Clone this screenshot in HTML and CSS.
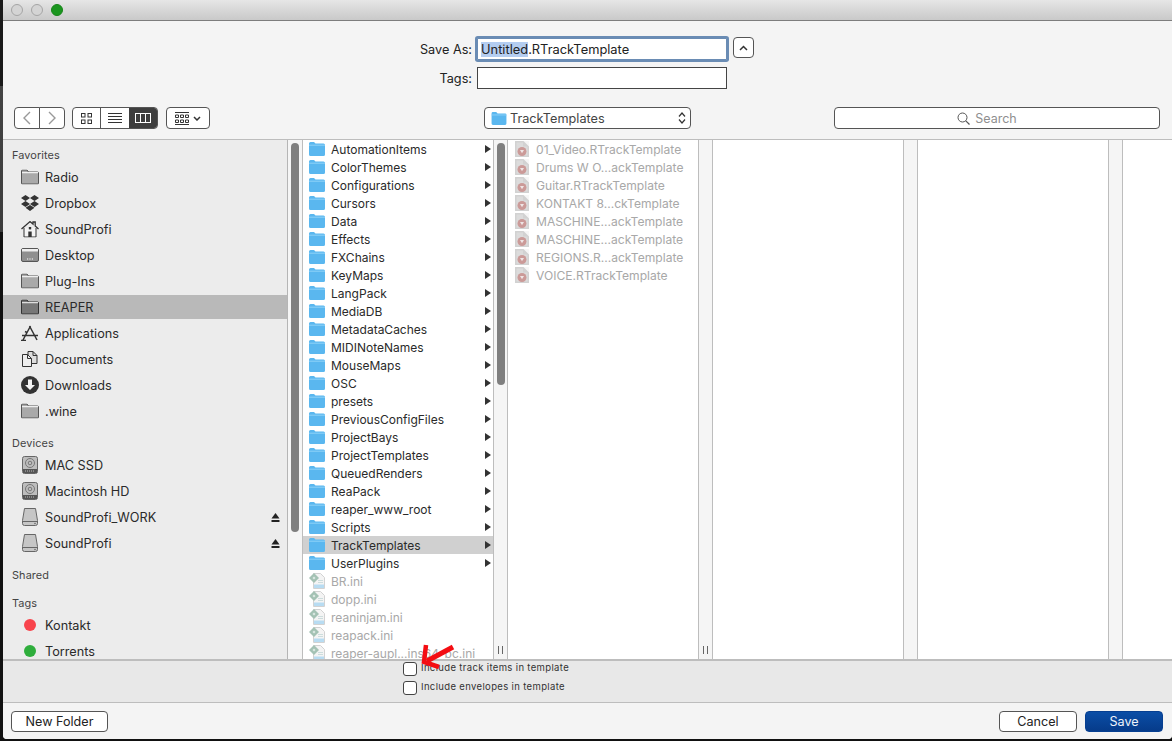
FILE: index.html
```html
<!DOCTYPE html>
<html lang="en">
<head>
<meta charset="utf-8">
<title>Save As</title>
<link rel="stylesheet" href="styles.css">
</head>
<body>
<svg class="defs" width="0" height="0" aria-hidden="true">
  <symbol id="side-folder" viewBox="0 0 18 15"><path d="M.5 14V1.500q0-1 1-1h4.500l1.500 2h9q1 0 1 1V14q0 .5-.5.5H1q-.5 0-.5-.5z" fill="#a9a9a9" stroke="#555"/><path d="M1 3.200h16" stroke="#eee" stroke-width="1.200"/></symbol>
  <symbol id="side-folder-dark" viewBox="0 0 18 15"><path d="M.5 14V1.500q0-1 1-1h4.500l1.500 2h9q1 0 1 1V14q0 .5-.5.5H1q-.5 0-.5-.5z" fill="#777" stroke="#333"/><path d="M1 3.200h16" stroke="#ddd" stroke-width="1.200"/></symbol>
  <symbol id="dropbox" viewBox="0 0 18 16"><path d="M4.500 0 0 3l4.500 3L9 3zM13.500 0 9 3l4.500 3L18 3zM0 9l4.500 3L9 9 4.500 6zM18 9l-4.500 3L9 9l4.500-3zM4.500 12.800 9 10l4.500 2.800L9 16z" fill="#333"/></symbol>
  <symbol id="home" viewBox="0 0 18 17"><path d="M.5 8.500 9 1l3 2.600V1.500h2.200v4L17.500 8.500" fill="none" stroke="#333" stroke-width="1.300"/><path d="M3 7.500V16.500h12V7.500" fill="#f4f4f4" stroke="#333"/><rect x="7.300" y="11" width="3.400" height="5.500" fill="#333"/><rect x="7.800" y="6.500" width="2.400" height="2.400" fill="#333"/></symbol>
  <symbol id="desktop" viewBox="0 0 18 14"><rect x=".5" y=".5" width="17" height="13" rx="1.500" fill="#8f8f8f" stroke="#555"/><rect x="1" y="1" width="16" height="2.500" fill="#eee"/><path d="M6 11h1.200M8.400 11h1.200M10.800 11H12" stroke="#fff" stroke-width="1.200"/></symbol>
  <symbol id="apps" viewBox="0 0 18 16"><path d="M2 15 9.500 1M16 15 8.500 1M1 10.500h16M4 6.500l2 1M0 15.500h5" fill="none" stroke="#333" stroke-width="1.500"/></symbol>
  <symbol id="docs" viewBox="0 0 16 16"><path d="M6 .5h5l4 4v8H6z" fill="#ddd" stroke="#333"/><path d="M.5 3.500h5l4 4v8h-9z" fill="#eee" stroke="#333"/><path d="M5.500 3.500v4h4M11 .5v4h4" fill="none" stroke="#333"/></symbol>
  <symbol id="download" viewBox="0 0 18 18"><circle cx="9" cy="9" r="9" fill="#333"/><path d="M7 3.500h4V9h3l-5 5-5-5h3z" fill="#f5f5f5"/></symbol>
  <symbol id="hd" viewBox="0 0 16 18"><rect x=".5" y=".5" width="15" height="17" rx="2" fill="#bdbdbd" stroke="#666"/><circle cx="8" cy="7" r="4.500" fill="none" stroke="#777"/><circle cx="8" cy="7" r="1.800" fill="none" stroke="#777"/><rect x="1" y="13" width="14" height="4" fill="#555"/><path d="M3 15h10" stroke="#bbb" stroke-dasharray="1 1"/></symbol>
  <symbol id="ext" viewBox="0 0 16 18"><path d="M2.500.5h11l2 12v3q0 2-2 2h-11q-2 0-2-2v-3z" fill="#c6c6c6" stroke="#666"/><path d="M.8 13.500h14.400" stroke="#666"/><circle cx="13" cy="15.500" r=".7" fill="#555"/></symbol>
  <symbol id="eject" viewBox="0 0 9 9"><path d="M4.500 0 8.500 5.500H.5z" fill="#222"/><rect x=".5" y="7" width="8" height="2" fill="#222"/></symbol>
  <symbol id="folder" viewBox="0 0 16 14"><path d="M0 12.500V1.500Q0 0 1.500 0H5l1.500 1.500h8Q16 1.500 16 3v9.500q0 1.500-1.500 1.500h-13Q0 14 0 12.500z" fill="#5ab7ef"/><path d="M0 3.200h16" stroke="#8ed2f8"/></symbol>
  <symbol id="template" viewBox="0 0 14 16"><rect width="14" height="16" fill="#d2d2d2"/><path d="M8.500 0H14v5.500z" fill="#f6f6f6"/><path d="M1.500 1.500h6.500v4h4.500v9h-11z" fill="#dcdcdc"/><circle cx="7" cy="10.500" r="4.500" fill="#cb9a98"/><path d="M5 9h4l-2 3.300z" fill="#efe6e6"/></symbol>
  <symbol id="ini" viewBox="0 0 16 16"><path d="M4.500.5h7l4 4v11h-11z" fill="#f4f4f4" stroke="#d2d2d2"/><path d="M5 11.500h10v3.500H5z" fill="#b8dcf2"/><path d="M5 0 10 5 5 10 0 5z" fill="#a4c2b4"/><path d="M5 3.500 6.500 5 5 6.500 3.500 5z" fill="#dfeae5"/><path d="M9 7.500h5M9 9.500h5" stroke="#cdd"/></symbol>
</svg>

<div class="window">
  <div class="titlebar">
    <span class="light"></span><span class="light"></span><span class="light light-green"></span>
  </div>

  <header class="head">
    <div class="form-row">
      <label class="form-label">Save As:</label>
      <div class="name-field"><span class="selection">Untitled</span>.RTrackTemplate</div>
      <button class="collapse" type="button"><svg width="9" height="6" viewBox="0 0 9 6"><path d="M1 5 4.500 1.500 8 5" fill="none" stroke="#333" stroke-width="1.500"/></svg></button>
    </div>
    <div class="form-row form-row-tags">
      <label class="form-label">Tags:</label>
      <div class="tags-field"></div>
    </div>
    <div class="toolbar">
      <div class="tool-group">
        <div class="seg seg-nav">
          <span class="seg-btn seg-back"><svg width="10" height="14" viewBox="0 0 10 14"><path d="M8 1 2 7l6 6" fill="none" stroke="#999" stroke-width="1.400"/></svg></span>
          <span class="seg-btn seg-fwd"><svg width="10" height="14" viewBox="0 0 10 14"><path d="M2 1l6 6-6 6" fill="none" stroke="#999" stroke-width="1.400"/></svg></span>
        </div>
        <div class="seg seg-view">
          <span class="view-btn view-icons"><svg width="11" height="11" viewBox="0 0 11 11" fill="none" stroke="#333"><rect x=".5" y=".5" width="3.500" height="3.500"/><rect x="7" y=".5" width="3.500" height="3.500"/><rect x=".5" y="7" width="3.500" height="3.500"/><rect x="7" y="7" width="3.500" height="3.500"/></svg></span>
          <span class="view-btn view-list"><svg width="14" height="11" viewBox="0 0 14 11" stroke="#333"><path d="M0 .5h14M0 3.500h14M0 6.500h14M0 9.500h14"/></svg></span>
          <span class="view-btn view-cols"><svg width="16" height="10" viewBox="0 0 16 10" fill="none" stroke="#fff"><rect x=".5" y=".5" width="15" height="9"/><path d="M5.500 0v10M10.500 0v10"/></svg></span>
        </div>
        <div class="seg seg-arrange">
          <svg width="14" height="13" viewBox="0 0 14 13" fill="none" stroke="#333"><path d="M0 .5h14M0 12.500h14"/><path d="M.5 3h3v2.500h-3zM5.500 3h3v2.500h-3zM10.500 3h3v2.500h-3zM.5 8h3v2.500h-3zM5.500 8h3v2.500h-3zM10.500 8h3v2.500h-3z"/></svg>
          <svg width="8" height="5" viewBox="0 0 8 5"><path d="M1 1l3 3 3-3" fill="none" stroke="#333" stroke-width="1.500"/></svg>
        </div>
      </div>
      <div class="location">
        <svg class="loc-folder" width="16" height="13"><use href="#folder"/></svg>
        <span class="loc-name">TrackTemplates</span>
        <svg width="8" height="14" viewBox="0 0 8 14"><path d="M1 5.500 4 2l3 3.500M1 8.500 4 12l3-3.500" fill="none" stroke="#333" stroke-width="1.200"/></svg>
      </div>
      <div class="search">
        <svg width="13" height="13" viewBox="0 0 13 13"><circle cx="5.500" cy="5.500" r="4.500" fill="none" stroke="#555"/><path d="M8.800 8.800 12.500 12.500" stroke="#555" stroke-width="1.200"/></svg>
        <span>Search</span>
      </div>
    </div>
  </header>

  <main class="browser">
    <nav class="sidebar">
      <h2 class="side-title">Favorites</h2>
      <div class="side-item"><svg class="side-icon" width="18" height="15"><use href="#side-folder"/></svg>Radio</div>
      <div class="side-item"><svg class="side-icon" width="18" height="16"><use href="#dropbox"/></svg>Dropbox</div>
      <div class="side-item"><svg class="side-icon" width="18" height="17"><use href="#home"/></svg>SoundProfi</div>
      <div class="side-item"><svg class="side-icon" width="18" height="14"><use href="#desktop"/></svg>Desktop</div>
      <div class="side-item"><svg class="side-icon" width="18" height="15"><use href="#side-folder"/></svg>Plug-Ins</div>
      <div class="side-item side-active"><svg class="side-icon" width="18" height="15"><use href="#side-folder-dark"/></svg>REAPER</div>
      <div class="side-item"><svg class="side-icon" width="18" height="16"><use href="#apps"/></svg>Applications</div>
      <div class="side-item"><svg class="side-icon" width="16" height="16"><use href="#docs"/></svg>Documents</div>
      <div class="side-item"><svg class="side-icon" width="18" height="18"><use href="#download"/></svg>Downloads</div>
      <div class="side-item"><svg class="side-icon" width="18" height="15"><use href="#side-folder"/></svg>.wine</div>
      <h2 class="side-title side-title-gap">Devices</h2>
      <div class="side-item"><svg class="side-icon" width="16" height="18"><use href="#hd"/></svg>MAC SSD</div>
      <div class="side-item"><svg class="side-icon" width="16" height="18"><use href="#hd"/></svg>Macintosh HD</div>
      <div class="side-item"><svg class="side-icon" width="16" height="18"><use href="#ext"/></svg>SoundProfi_WORK<svg class="eject" width="9" height="9"><use href="#eject"/></svg></div>
      <div class="side-item"><svg class="side-icon" width="16" height="18"><use href="#ext"/></svg>SoundProfi<svg class="eject" width="9" height="9"><use href="#eject"/></svg></div>
      <h2 class="side-title side-title-gap">Shared</h2>
      <h2 class="side-title side-title-tags">Tags</h2>
      <div class="side-item"><span class="tag tag-red"></span>Kontakt</div>
      <div class="side-item"><span class="tag tag-green"></span>Torrents</div>
    </nav>

    <div class="gutter gutter-first"><span class="thumb thumb-first"></span></div>

    <section class="column column-one">
      <div class="row"><svg class="row-icon" width="16" height="14"><use href="#folder"/></svg>AutomationItems<i class="chev"></i></div>
      <div class="row"><svg class="row-icon" width="16" height="14"><use href="#folder"/></svg>ColorThemes<i class="chev"></i></div>
      <div class="row"><svg class="row-icon" width="16" height="14"><use href="#folder"/></svg>Configurations<i class="chev"></i></div>
      <div class="row"><svg class="row-icon" width="16" height="14"><use href="#folder"/></svg>Cursors<i class="chev"></i></div>
      <div class="row"><svg class="row-icon" width="16" height="14"><use href="#folder"/></svg>Data<i class="chev"></i></div>
      <div class="row"><svg class="row-icon" width="16" height="14"><use href="#folder"/></svg>Effects<i class="chev"></i></div>
      <div class="row"><svg class="row-icon" width="16" height="14"><use href="#folder"/></svg>FXChains<i class="chev"></i></div>
      <div class="row"><svg class="row-icon" width="16" height="14"><use href="#folder"/></svg>KeyMaps<i class="chev"></i></div>
      <div class="row"><svg class="row-icon" width="16" height="14"><use href="#folder"/></svg>LangPack<i class="chev"></i></div>
      <div class="row"><svg class="row-icon" width="16" height="14"><use href="#folder"/></svg>MediaDB<i class="chev"></i></div>
      <div class="row"><svg class="row-icon" width="16" height="14"><use href="#folder"/></svg>MetadataCaches<i class="chev"></i></div>
      <div class="row"><svg class="row-icon" width="16" height="14"><use href="#folder"/></svg>MIDINoteNames<i class="chev"></i></div>
      <div class="row"><svg class="row-icon" width="16" height="14"><use href="#folder"/></svg>MouseMaps<i class="chev"></i></div>
      <div class="row"><svg class="row-icon" width="16" height="14"><use href="#folder"/></svg>OSC<i class="chev"></i></div>
      <div class="row"><svg class="row-icon" width="16" height="14"><use href="#folder"/></svg>presets<i class="chev"></i></div>
      <div class="row"><svg class="row-icon" width="16" height="14"><use href="#folder"/></svg>PreviousConfigFiles<i class="chev"></i></div>
      <div class="row"><svg class="row-icon" width="16" height="14"><use href="#folder"/></svg>ProjectBays<i class="chev"></i></div>
      <div class="row"><svg class="row-icon" width="16" height="14"><use href="#folder"/></svg>ProjectTemplates<i class="chev"></i></div>
      <div class="row"><svg class="row-icon" width="16" height="14"><use href="#folder"/></svg>QueuedRenders<i class="chev"></i></div>
      <div class="row"><svg class="row-icon" width="16" height="14"><use href="#folder"/></svg>ReaPack<i class="chev"></i></div>
      <div class="row"><svg class="row-icon" width="16" height="14"><use href="#folder"/></svg>reaper_www_root<i class="chev"></i></div>
      <div class="row"><svg class="row-icon" width="16" height="14"><use href="#folder"/></svg>Scripts<i class="chev"></i></div>
      <div class="row row-selected"><svg class="row-icon" width="16" height="14"><use href="#folder"/></svg>TrackTemplates<i class="chev"></i></div>
      <div class="row"><svg class="row-icon" width="16" height="14"><use href="#folder"/></svg>UserPlugins<i class="chev"></i></div>
      <div class="row row-dim"><svg class="row-icon" width="16" height="16"><use href="#ini"/></svg>BR.ini</div>
      <div class="row row-dim"><svg class="row-icon" width="16" height="16"><use href="#ini"/></svg>dopp.ini</div>
      <div class="row row-dim"><svg class="row-icon" width="16" height="16"><use href="#ini"/></svg>reaninjam.ini</div>
      <div class="row row-dim"><svg class="row-icon" width="16" height="16"><use href="#ini"/></svg>reapack.ini</div>
      <div class="row row-dim"><svg class="row-icon" width="16" height="16"><use href="#ini"/></svg>reaper-aupl...ins64-bc.ini</div>
    </section>

    <div class="gutter"><span class="thumb thumb-second"></span><span class="resize-grip"></span></div>

    <section class="column column-two">
      <div class="row row-dim"><svg class="row-icon" width="14" height="16"><use href="#template"/></svg>01_Video.RTrackTemplate</div>
      <div class="row row-dim"><svg class="row-icon" width="14" height="16"><use href="#template"/></svg>Drums W O...ackTemplate</div>
      <div class="row row-dim"><svg class="row-icon" width="14" height="16"><use href="#template"/></svg>Guitar.RTrackTemplate</div>
      <div class="row row-dim"><svg class="row-icon" width="14" height="16"><use href="#template"/></svg>KONTAKT 8...ckTemplate</div>
      <div class="row row-dim"><svg class="row-icon" width="14" height="16"><use href="#template"/></svg>MASCHINE...ackTemplate</div>
      <div class="row row-dim"><svg class="row-icon" width="14" height="16"><use href="#template"/></svg>MASCHINE...ackTemplate</div>
      <div class="row row-dim"><svg class="row-icon" width="14" height="16"><use href="#template"/></svg>REGIONS.R...ackTemplate</div>
      <div class="row row-dim"><svg class="row-icon" width="14" height="16"><use href="#template"/></svg>VOICE.RTrackTemplate</div>
    </section>

    <div class="gutter"><span class="resize-grip"></span></div>
    <section class="column column-empty"></section>
    <div class="gutter"></div>
    <section class="column column-empty"></section>
    <div class="gutter"></div>
    <section class="column column-rest"></section>
  </main>

  <section class="accessory">
    <label class="check-row"><span class="checkbox"></span>Include track items in template</label>
    <label class="check-row"><span class="checkbox"></span>Include envelopes in template</label>
  </section>

  <footer class="footer">
    <button class="btn btn-new" type="button">New Folder</button>
    <div class="footer-actions">
      <button class="btn btn-cancel" type="button">Cancel</button>
      <button class="btn btn-save" type="button">Save</button>
    </div>
  </footer>

  <svg class="red-arrow" width="40" height="30" viewBox="0 0 40 30"><path d="M33 3 7 17" stroke="#f40d12" stroke-width="5"/><path d="M6 1 4 18l15 5" fill="none" stroke="#f40d12" stroke-width="4.500"/></svg>
</div>
</body>
</html>
```

FILE: styles.css
```css
* { box-sizing: border-box; }
html, body { margin: 0; padding: 0; height: 100%; }
body {
  width: 1172px;
  height: 741px;
  overflow: hidden;
  background: linear-gradient(#1a1a1a 86px, #444 86px, #3c3c3c 232px, #111 232px);
  padding: 0 0 2px 3px;
  font-family: Inter, "Liberation Sans", sans-serif;
  font-size: 12.600px;
  color: #2a2a2a;
}
.defs { position: absolute; }
.window {
  position: relative;
  width: 1169px;
  height: 739px;
  display: flex;
  flex-direction: column;
  background: #f4f4f4;
  border-radius: 0 0 4px 4px;
  overflow: hidden;
}

/* title bar */
.titlebar {
  height: 21px;
  flex: none;
  display: flex;
  align-items: center;
  gap: 8px;
  padding: 0 0 1px 8px;
  background: linear-gradient(#e6e6e6, #c9c9c9);
  border-bottom: 1px solid #7d7d7d;
}
.light { width: 12px; height: 12px; border-radius: 50%; border: 1px solid #a5a5a5; background: #d4d4d4; }
.light-green { background: #1b961f; border-color: #178419; }

/* header */
.head {
  height: 119px;
  flex: none;
  background: #f4f4f4;
  border-bottom: 1px solid #bdbdbd;
  display: flex;
  flex-direction: column;
}
.form-row { display: flex; align-items: center; height: 24px; margin-top: 16px; padding-left: 409px; }
.form-row-tags { margin-top: 6px; height: 22px; }
.form-label { width: 60px; flex: none; text-align: right; white-space: nowrap; font-size: 12.700px; color: #222; }
.name-field {
  width: 250px;
  height: 22px;
  margin-left: 5px;
  padding: 2px 0 0 3px;
  background: #fff;
  border: 1px solid #6a8cb4;
  box-shadow: 0 0 0 2px #6a8cb4;
  border-radius: 1px;
  font-size: 12.850px;
  line-height: 18px;
  color: #222;
  white-space: nowrap;
}
.selection { background: #b4cdf0; }
.collapse {
  width: 21px;
  height: 21px;
  margin-left: 6px;
  align-self: flex-start;
  padding: 0;
  display: flex;
  align-items: center;
  justify-content: center;
  background: #fff;
  border: 1px solid #555;
  border-radius: 4px;
}
.tags-field { width: 250px; height: 22px; margin-left: 5px; background: #fff; border: 1px solid #444; }
.toolbar { display: flex; align-items: center; height: 22px; margin-top: 18px; padding-left: 11px; }
.tool-group { display: flex; gap: 8px; width: 470px; }
.seg { display: flex; height: 22px; background: #fff; border: 1px solid #555; border-radius: 4px; overflow: hidden; }
.seg-nav { border: 0; background: none; overflow: visible; }
.seg-btn {
  width: 26px;
  height: 22px;
  display: flex;
  align-items: center;
  justify-content: center;
  background: #fff;
  border: 1px solid #555;
}
.seg-back { border-radius: 4px 0 0 4px; }
.seg-fwd { border-radius: 0 4px 4px 0; margin-left: -1px; }
.seg-view { margin-left: -1px; }
.view-btn { display: flex; align-items: center; justify-content: center; height: 20px; width: 28px; }
.view-icons { border-right: 1px solid #555; }
.view-cols { background: #3e3e3e; }
.seg-arrange { width: 44px; align-items: center; justify-content: center; gap: 4px; }
.location {
  width: 207px;
  height: 22px;
  display: flex;
  align-items: center;
  padding: 0 4px 0 6px;
  background: #fff;
  border: 1px solid #555;
  border-radius: 4px;
}
.loc-folder { flex: none; }
.loc-name { flex: 1; margin-left: 3px; font-size: 12.700px; color: #444; }
.search {
  width: 326px;
  height: 22px;
  margin-left: 143px;
  padding-right: 20px;
  display: flex;
  align-items: center;
  justify-content: center;
  gap: 5px;
  background: #fff;
  border: 1px solid #555;
  border-radius: 4px;
  color: #8f8f8f;
  font-size: 12.500px;
}

/* browser */
.browser { height: 519px; flex: none; display: flex; background: #fff; overflow: hidden; }
.sidebar {
  width: 285px;
  flex: none;
  height: 100%;
  overflow: hidden;
  padding-top: 9px;
  background: #ececec;
  border-right: 1px solid #b5b5b5;
}
.side-title { margin: 0; padding-left: 9px; height: 14px; font-size: 10.900px; line-height: 12px; font-weight: 400; color: #444; letter-spacing: .1px; }
.side-title-gap { margin-top: 14px; }
.side-title-tags { margin-top: 14px; }
.side-item {
  display: flex;
  align-items: center;
  height: 24px;
  margin-top: 2px;
  padding-left: 42px;
  position: relative;
  font-size: 12.700px;
  color: #2a2a2a;
}
.side-active { background: #b9b9b9; }
.side-icon { position: absolute; left: 27px; top: 50%; transform: translate(-50%, -50%); }
.eject { margin-left: auto; margin-right: 7px; }
.tag { position: absolute; left: 21px; top: 6px; width: 12px; height: 12px; border-radius: 50%; }
.tag-red { background: #f8444c; }
.tag-green { background: #2fae3c; }

.gutter { width: 14px; flex: none; background: #f5f5f5; border-right: 1px solid #bdbdbd; position: relative; }
.gutter-first { width: 15px; }
.thumb { position: absolute; left: 3px; width: 8px; border-radius: 4px; background: #7f7f7f; }
.thumb-first { top: 3px; height: 389px; }
.thumb-second { top: 3px; height: 242px; }
.resize-grip { position: absolute; left: 4px; bottom: 5px; width: 5px; height: 8px; border-left: 1px solid #666; border-right: 1px solid #666; }

.column { width: 191px; flex: none; height: 100%; position: relative; overflow: hidden; background: #fff; border-right: 1px solid #bdbdbd; }
.column-rest { flex: 1; border-right: 0; }
.row { display: flex; align-items: center; height: 18px; padding-left: 28px; position: relative; font-size: 12px; color: #2a2a2a; white-space: nowrap; }
.column-two .row { font-size: 12.100px; }
.row-icon { position: absolute; left: 6px; top: 2px; }
.column-two .row-icon { left: 7px; top: 1px; }
.row-selected { background: #d0d0d0; }
.row-dim { color: #a8a8a8; }
.column-one .row-dim .row-icon { top: 1px; }
.chev { position: absolute; right: 2px; top: 5px; width: 0; height: 0; border-left: 6px solid #333; border-top: 4px solid transparent; border-bottom: 4px solid transparent; }

/* accessory */
.accessory {
  height: 44px;
  flex: none;
  padding: 1px 0 0 400px;
  background: #e8e8e8;
  border-top: 2px solid #bdbdbd;
  border-bottom: 1px solid #bdbdbd;
  display: flex;
  flex-direction: column;
  gap: 5px;
}
.check-row { display: flex; align-items: flex-start; height: 14px; gap: 4px; font-size: 9.500px; line-height: 12px; letter-spacing: .35px; color: #333; }
.checkbox { width: 14px; height: 14px; background: #fff; border: 1px solid #444; border-radius: 3px; flex: none; }

/* footer */
.footer { flex: 1; display: flex; align-items: center; justify-content: space-between; padding: 1px 9px 0 8px; background: #f4f4f4; }
.footer-actions { display: flex; gap: 8px; }
.btn { height: 21px; padding: 0; font-family: inherit; font-size: 12.600px; color: #222; background: #fff; border: 1px solid #555; border-radius: 4px; }
.btn-new { width: 97px; }
.btn-cancel { width: 78px; }
.btn-save { width: 78px; color: #eef3fb; background: linear-gradient(#0b4ea6, #063b8a); border-color: #063f91; }

.red-arrow { position: absolute; left: 417px; top: 644px; }
```
